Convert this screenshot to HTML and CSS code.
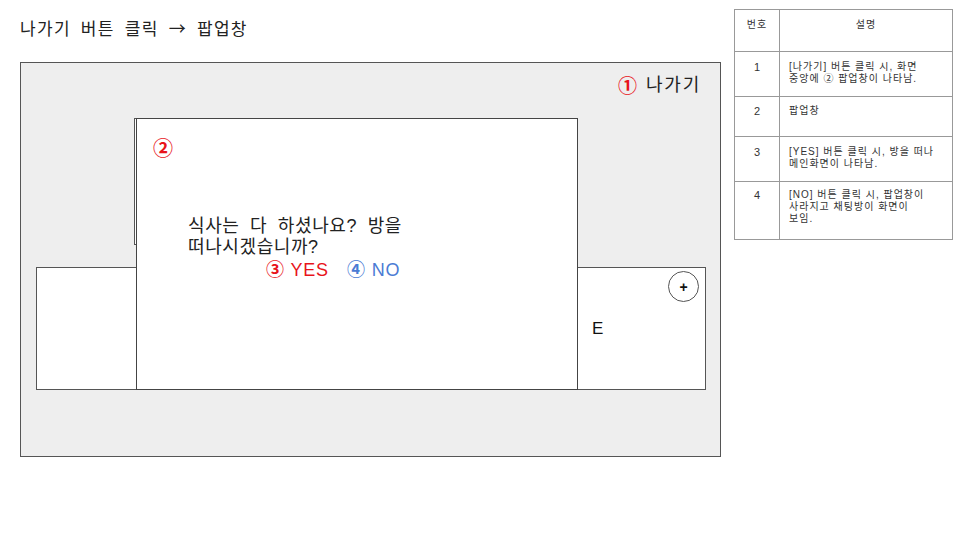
FILE: index.html
```html
<!DOCTYPE html>
<html lang="ko">
<head>
<meta charset="utf-8">
<title>나가기 버튼 클릭 → 팝업창</title>
<link rel="stylesheet" href="styles.css">
</head>
<body>
<div class="page">
  <div class="main">
    <h1 class="title">나가기 버튼 클릭 <span class="arrow">→</span> 팝업창</h1>
    <div class="screen">
      <div class="exit"><span class="num red">①</span><span class="exit-label">나가기</span></div>
      <div class="chat">
        <div class="chat-right">
          <span class="plus">+</span>
          <span class="e">E</span>
        </div>
      </div>
      <div class="back-box"></div>
      <div class="popup">
        <div class="num red">②</div>
        <p class="msg">식사는 다 하셨나요? 방을<br>떠나시겠습니까?</p>
        <div class="actions">
          <span class="red"><span class="num">③</span> YES</span>
          <span class="blue"><span class="num">④</span> NO</span>
        </div>
      </div>
    </div>
  </div>
  <div class="spec">
    <div class="cell head no">번호</div>
    <div class="cell head desc">설명</div>
    <div class="cell no r1">1</div>
    <div class="cell r1">[나가기] 버튼 클릭 시, 화면<br>중앙에 ② 팝업창이 나타남.</div>
    <div class="cell no r2">2</div>
    <div class="cell r2">팝업창</div>
    <div class="cell no r3">3</div>
    <div class="cell r3">[YES] 버튼 클릭 시, 방을 떠나<br>메인화면이 나타남.</div>
    <div class="cell no r4">4</div>
    <div class="cell r4">[NO] 버튼 클릭 시, 팝업창이<br>사라지고 채팅방이 화면이<br>보임.</div>
  </div>
</div>
</body>
</html>
```

FILE: styles.css
```css
* { box-sizing: border-box; }
html, body { margin: 0; padding: 0; background: #fff; }
body {
  font-family: "Liberation Sans", "Noto Sans CJK KR", sans-serif;
  color: #222;
}
.page { display: flex; align-items: flex-start; }
.main { width: 734px; padding-left: 20px; }
.title {
  margin: 0;
  height: 62px;
  padding-top: 17px;
  font-size: 17px;
  line-height: 22px;
  font-weight: normal;
  letter-spacing: 1.3px;
  word-spacing: 4px;
  color: #222;
}
.arrow { font-family: "Noto Sans CJK KR", sans-serif; }
.screen {
  position: relative;
  width: 701px;
  height: 395px;
  border: 1px solid #555;
  background: #eeeeee;
}
.red { color: #e8141b; }
.blue { color: #4a7bd4; }
.num {
  font-family: "Noto Sans CJK KR", sans-serif;
  font-weight: bold;
  font-size: 19px;
}
.exit {
  display: flex;
  justify-content: flex-end;
  align-items: center;
  height: 34px;
  padding-top: 10px;
  padding-right: 19px;
  line-height: 24px;
  font-size: 18px;
}
.exit-label { margin-left: 9px; letter-spacing: 1.8px; color: #222; }
.chat {
  margin-top: 170px;
  margin-left: 15px;
  width: 670px;
  height: 123px;
  border: 1px solid #555;
  background: #fff;
  display: flex;
  justify-content: flex-end;
}
.chat-right {
  width: 127px;
  display: flex;
  flex-direction: column;
}
.plus {
  align-self: flex-end;
  width: 31px;
  height: 31px;
  margin-top: 3px;
  margin-right: 6px;
  border: 1px solid #555;
  border-radius: 50%;
  display: flex;
  align-items: center;
  justify-content: center;
  font-size: 14px;
  font-weight: bold;
  line-height: 1;
  color: #111;
}
.e {
  margin-top: 17px;
  margin-left: 14px;
  font-size: 17px;
  line-height: 20px;
  color: #111;
}
.back-box {
  position: absolute;
  left: 113px;
  top: 55px;
  width: 60px;
  height: 127px;
  border: 1px solid #555;
  background: #fff;
}
.popup {
  position: absolute;
  left: 115px;
  top: 55px;
  width: 442px;
  height: 272px;
  border: 1px solid #444;
  background: #fff;
  padding: 19px 16px 0;
}
.popup > .num { line-height: 20px; font-size: 20px; }
.msg {
  margin: 58px 0 0 35px;
  font-size: 18px;
  line-height: 21px;
  letter-spacing: 0.6px;
  word-spacing: 5px;
  color: #222;
}
.actions {
  margin-left: 113px;
  display: flex;
  gap: 18px;
  font-size: 18px;
  line-height: 21px;
  letter-spacing: 0.8px;
  word-spacing: 1px;
}
.actions .num { font-size: 18px; letter-spacing: 0; }
.spec {
  margin-top: 9px;
  width: 219px;
  display: grid;
  grid-template-columns: 45px 1fr;
  grid-template-rows: 42px 45px 40px 45px 58px;
  border-top: 1px solid #999;
  border-left: 1px solid #999;
  font-size: 10px;
  line-height: 12px;
  color: #333;
  letter-spacing: 1px;
}
.cell {
  border-right: 1px solid #999;
  border-bottom: 1px solid #999;
  padding: 9px 0 0 9px;
}
.cell.no { text-align: center; padding-left: 0; font-size: 11px; letter-spacing: 0; }
.cell.head { padding-top: 9px; }
.cell.head.no { font-size: 10px; letter-spacing: 1px; }
.cell.desc { text-align: center; padding-left: 0; }
.r2 { padding-top: 8px; }
.r4 { padding-top: 7px; }
```
